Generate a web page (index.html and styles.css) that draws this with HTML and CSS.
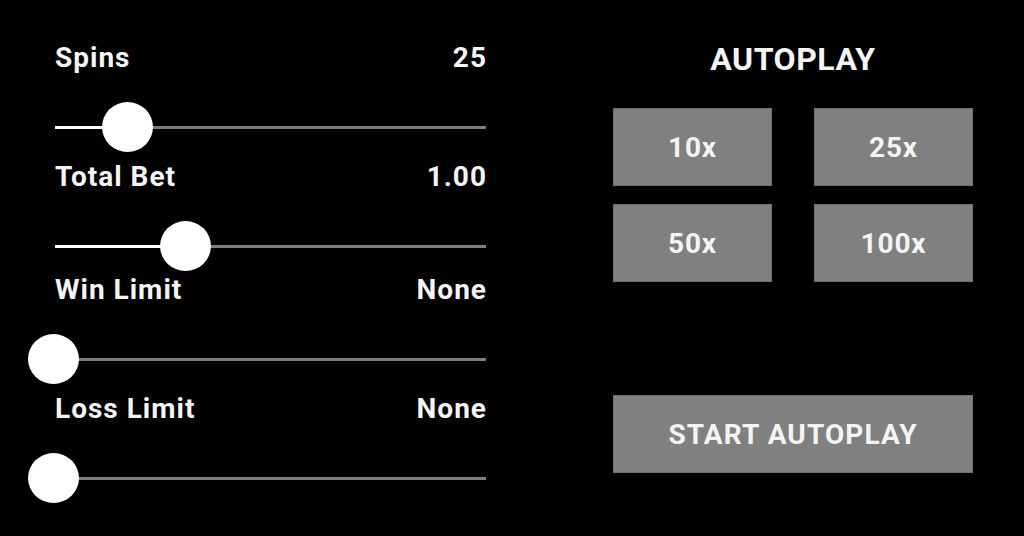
FILE: index.html
```html
<!DOCTYPE html>
<html>
<head>
<meta charset="utf-8">
<link rel="stylesheet" href="styles.css">
</head>
<body>
<div class="panel">
  <div class="settings">
    <div class="row">
      <div class="row-head"><span>Spins</span><span>25</span></div>
      <div class="slider"><div class="fill" style="width:72px"></div><div class="thumb" style="left:47px"></div></div>
    </div>
    <div class="row">
      <div class="row-head"><span>Total Bet</span><span>1.00</span></div>
      <div class="slider"><div class="fill" style="width:130px"></div><div class="thumb" style="left:105px"></div></div>
    </div>
    <div class="row row-tight">
      <div class="row-head"><span>Win Limit</span><span>None</span></div>
      <div class="slider"><div class="fill" style="width:0px"></div><div class="thumb" style="left:-27px"></div></div>
    </div>
    <div class="row">
      <div class="row-head"><span>Loss Limit</span><span>None</span></div>
      <div class="slider"><div class="fill" style="width:0px"></div><div class="thumb" style="left:-27px"></div></div>
    </div>
  </div>
  <div class="autoplay">
    <div class="title">AUTOPLAY</div>
    <div class="choices">
      <div class="btn">10x</div>
      <div class="btn">25x</div>
      <div class="btn">50x</div>
      <div class="btn">100x</div>
    </div>
    <div class="btn start">START AUTOPLAY</div>
  </div>
</div>
</body>
</html>
```
FILE: styles.css
```css
html, body {
  margin: 0;
  padding: 0;
  background: #000;
  height: 100%;
}
body {
  font-family: Roboto, "Liberation Sans", sans-serif;
  font-weight: 700;
  color: #f4f4f4;
}
.panel {
  display: flex;
  padding: 0 51px 0 55px;
}
.settings {
  width: 431px;
  padding-top: 43px;
  display: flex;
  flex-direction: column;
  gap: 10px;
}
.row-tight {
  margin-top: -6px;
}
.row-head {
  display: flex;
  justify-content: space-between;
  font-size: 28px;
  line-height: 30px;
  height: 30px;
  letter-spacing: 1px;
}
.row-head span:last-child {
  margin-right: -1px;
}
.slider {
  position: relative;
  height: 50px;
  margin-top: 29px;
}
.slider::before {
  content: "";
  position: absolute;
  left: 0;
  right: 0;
  top: 24px;
  height: 3px;
  background: #7d7d7d;
}
.fill {
  position: absolute;
  left: 0;
  top: 24px;
  height: 3px;
  background: #fff;
}
.thumb {
  position: absolute;
  top: 0;
  width: 51px;
  height: 50px;
  border-radius: 50%;
  background: #fff;
}
.autoplay {
  margin-left: auto;
  width: 360px;
  padding-top: 43px;
  display: flex;
  flex-direction: column;
}
.title {
  text-align: center;
  font-size: 32px;
  line-height: 32px;
  letter-spacing: 0.5px;
}
.choices {
  margin-top: 33px;
  display: grid;
  grid-template-columns: 159px 159px;
  justify-content: space-between;
  row-gap: 18px;
}
.btn {
  box-sizing: border-box;
  height: 78px;
  background: #808080;
  border: 1px solid #707070;
  display: flex;
  align-items: center;
  justify-content: center;
  font-size: 28px;
  letter-spacing: 0.8px;
}
.start {
  margin-top: 113px;
  letter-spacing: 1.1px;
}
```
